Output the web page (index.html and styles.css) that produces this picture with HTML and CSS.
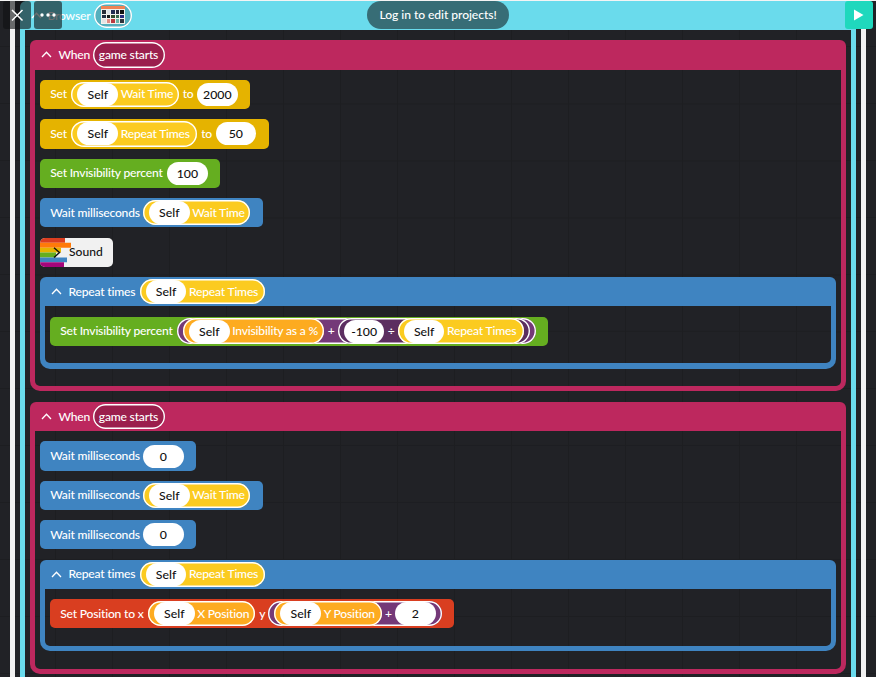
FILE: index.html
```html
<!DOCTYPE html>
<html lang="en">
<head>
<meta charset="utf-8">
<title>Project editor</title>
<link rel="stylesheet" href="styles.css">
</head>
<body>
<main class="frame">
  <section class="object">
    <header class="object-head">
      <svg class="chev" viewBox="0 0 11 7"><path d="M1 6 5.500 1.200 10 6"/></svg>
      <span class="t browser">Browser</span>
      <span class="thumb">
        <svg viewBox="0 0 24 18"><rect width="24" height="18" fill="#f2f2ec"/><rect width="24" height="3" fill="#ef8354"/><rect x="1" y="4" width="4" height="4" fill="#252c36"/><rect x="6" y="4" width="3" height="4" fill="#dce2e5"/><rect x="10" y="4" width="4" height="4" fill="#202b51"/><rect x="15" y="4" width="3" height="4" fill="#26283a"/><rect x="19" y="4" width="4" height="4" fill="#111"/><rect x="1" y="9" width="4" height="3" fill="#222f42"/><rect x="6" y="9" width="3" height="3" fill="#151a1a"/><rect x="10" y="9" width="4" height="3" fill="#304b2d"/><rect x="15" y="9" width="3" height="3" fill="#35694c"/><rect x="19" y="9" width="4" height="3" fill="#282b7b"/><rect x="1" y="13" width="4" height="4" fill="#e7e3e4"/><rect x="6" y="13" width="3" height="4" fill="#e18c85"/><rect x="10" y="13" width="4" height="4" fill="#b93a40"/><rect x="15" y="13" width="3" height="4" fill="#6cb4a5"/><rect x="19" y="13" width="4" height="4" fill="#30343d"/></svg>
      </span>
    </header>
    <div class="scripts">
      <section class="loop event">
        <header class="loop-head"><svg class="chev" viewBox="0 0 11 7"><path d="M1 6 5.500 1.200 10 6"/></svg><span class="t when">When</span><span class="rep maroon"><span class="t game">game starts</span></span></header>
        <div class="body">
          <div class="block gold"><span class="t set">Set</span><span class="rep yellow"><span class="val">Self</span><span class="t waittime">Wait Time</span></span><span class="t to">to</span><span class="val">2000</span></div>
          <div class="block gold"><span class="t set">Set</span><span class="rep yellow"><span class="val">Self</span><span class="t reptimes">Repeat Times</span></span><span class="t to">to</span><span class="val">50</span></div>
          <div class="block green"><span class="t invis">Set Invisibility percent</span><span class="val">100</span></div>
          <div class="block blue"><span class="t waitms">Wait milliseconds</span><span class="rep yellow"><span class="val">Self</span><span class="t waittime">Wait Time</span></span></div>
          <div class="block sound">
            <svg class="rainbow" viewBox="0 0 31 30" preserveAspectRatio="none"><path fill="#db3e20" d="M0 0h25v5H0z"/><path fill="#ff7a09" d="M0 5h31v5H0z"/><path fill="#e5b300" d="M0 10h21v5H0z"/><path fill="#65ae20" d="M0 15h16v5H0z"/><path fill="#3f84c1" d="M0 20h27v5H0z"/><path fill="#a5057a" d="M0 25h24v5H0z"/><path class="arrow" d="M14 10l5.500 5-5.500 5"/></svg>
            <span class="t snd">Sound</span>
          </div>
          <section class="loop repeat">
            <header class="loop-head"><svg class="chev" viewBox="0 0 11 7"><path d="M1 6 5.500 1.200 10 6"/></svg><span class="t rept">Repeat times</span><span class="rep yellow"><span class="val">Self</span><span class="t reptimes">Repeat Times</span></span></header>
            <div class="body">
              <div class="block green"><span class="t invis">Set Invisibility percent</span><span class="rep purple"><span class="rep orange"><span class="val">Self</span><span class="t invpct">Invisibility as a %</span></span><span class="t op">+</span><span class="rep plum"><span class="val">-100</span><span class="t op">÷</span><span class="rep yellow"><span class="val">Self</span><span class="t reptimes">Repeat Times</span></span></span></span></div>
            </div>
          </section>
        </div>
      </section>
      <section class="loop event">
        <header class="loop-head"><svg class="chev" viewBox="0 0 11 7"><path d="M1 6 5.500 1.200 10 6"/></svg><span class="t when">When</span><span class="rep maroon"><span class="t game">game starts</span></span></header>
        <div class="body">
          <div class="block blue"><span class="t waitms">Wait milliseconds</span><span class="val">0</span></div>
          <div class="block blue"><span class="t waitms">Wait milliseconds</span><span class="rep yellow"><span class="val">Self</span><span class="t waittime">Wait Time</span></span></div>
          <div class="block blue"><span class="t waitms">Wait milliseconds</span><span class="val">0</span></div>
          <section class="loop repeat">
            <header class="loop-head"><svg class="chev" viewBox="0 0 11 7"><path d="M1 6 5.500 1.200 10 6"/></svg><span class="t rept">Repeat times</span><span class="rep yellow"><span class="val">Self</span><span class="t reptimes">Repeat Times</span></span></header>
            <div class="body">
              <div class="block red"><span class="t setpos">Set Position to x</span><span class="rep orange"><span class="val">Self</span><span class="t xpos">X Position</span></span><span class="t y">y</span><span class="rep purple"><span class="rep orange"><span class="val">Self</span><span class="t xpos">Y Position</span></span><span class="t op">+</span><span class="val">2</span></span></div>
            </div>
          </section>
        </div>
      </section>
    </div>
  </section>
</main>
<div class="tool close"><svg viewBox="0 0 28 28"><path d="M9 9l10.500 10.500M19.500 9L9 19.500"/></svg></div>
<div class="tool more"><svg viewBox="0 0 28 28"><circle cx="8" cy="14" r="1.700"/><circle cx="14" cy="14" r="1.700"/><circle cx="20" cy="14" r="1.700"/></svg></div>
<div class="notice"><span class="t login">Log in to edit projects!</span></div>
<div class="tool play"><svg viewBox="0 0 28 28"><path d="M9 8.500v11l9.500-5.500z"/></svg></div>
</body>
</html>
```

FILE: styles.css
```css
* { box-sizing: border-box; }
body, .body {
  background-color: #212226;
  background-image:
    linear-gradient(90deg, #1d1e21 1px, transparent 1px),
    linear-gradient(#1d1e21 1px, transparent 1px);
  background-size: 57px 57px;
  background-position: 55px 0, 0 46px;
  background-attachment: fixed;
}
body {
  margin: 0;
  height: 677px;
  overflow: hidden;
  position: relative;
  border-top: 1px solid #f4f4f4;
  font: 500 12.1px/16px Lato, "Liberation Sans", sans-serif;
  color: #fff;
}
.frame { margin: 0 10px; height: 676px; padding: 0 5px; border: solid #f1f1f1; border-width: 0 5px; }
.object { height: 700px; border: solid #6adbec; border-width: 0 5px; border-radius: 6px 6px 0 0; }
.object-head { height: 29px; display: flex; align-items: center; padding-left: 6px; background: #6adbec; }
.object-head .chev { margin-right: 5.500px; }
.thumb { margin-left: 4px; width: 38px; height: 25.400px; box-shadow: inset 0 0 0 1.400px #fff; border-radius: 13px; background: #55afbd; display: flex; align-items: center; justify-content: center; }
.thumb svg { width: 24px; height: 18px; }
.scripts { padding: 10.400px 5px; display: flex; flex-direction: column; gap: 10.600px; }
.loop { flex: none; border-radius: 6px 6px 10px 10px; padding: 0 5px 5.300px; }
.loop-head { height: 29.200px; display: flex; align-items: center; padding-left: 6px; }
.chev { width: 11px; height: 7px; flex: none; margin-right: 6.500px; fill: none; stroke: #fff; stroke-width: 1.300; }
.event { background: #bd285e; }
.repeat { background: #3f84c1; align-self: stretch; }
.body {
  border-radius: 0 0 5px 5px;
  padding: 10.300px 5px 17.500px;
  display: flex;
  flex-direction: column;
  align-items: flex-start;
  gap: 10.250px;
}
.block { height: 29.200px; border-radius: 5px; padding: 0 12.500px 0 10.200px; display: flex; align-items: center; }
.gold { background: #e5b300; }
.green { background: #65ae20; }
.blue { background: #3f84c1; }
.red { background: #d93e20; }
.sound { width: 73px; padding: 0; background: #f1f1f1; color: #111; overflow: hidden; }
.rainbow { width: 31px; height: 29.200px; margin-right: -2px; flex: none; }
.arrow { fill: none; stroke: #111; stroke-width: 1.400; }
.t { white-space: pre; flex: none; letter-spacing: -.2px; }
.t.snd { letter-spacing: 0; }
.rep { height: 25.400px; flex: none; box-shadow: inset 0 0 0 1.400px #fff; border-radius: 13px; padding: 0 6px; margin-left: 3.800px; display: flex; align-items: center; }
.rep > .rep:first-child, .rep > .val:first-child { margin-left: 0; }
.maroon { background: #9b1f4d; }
.yellow { background: #fbcb20; }
.orange { background: #fdab20; }
.purple { background: #743978; }
.plum { background: #5c2e60; }
.val { width: 40.600px; height: 23px; flex: none; margin-left: 3.900px; border-radius: 12px; background: #fff; color: #111; text-align: center; font-size: 12.300px; line-height: 23px; }
.rep > .t { margin-left: 2.600px; }
.rep > .t.game { margin-left: 0; }
.rep + .t { margin-left: 4px; }
.rep > .op { margin-left: 3.200px; }
.op + .rep, .op + .val { margin-left: 3.200px; }
.browser { width: 42px; }
.when { width: 30.500px; }
.game { width: 60px; }
.set { width: 17.500px; }
.to { width: 10.500px; }
.waittime { width: 52px; }
.reptimes { width: 70.500px; }
.invis { width: 113px; }
.waitms { width: 89px; }
.rept { width: 67.500px; }
.invpct { width: 86.300px; }
.op { width: 7px; text-align: center; }
.setpos { width: 84px; }
.xpos { width: 52px; }
.y { width: 5.500px; }
.tool { position: absolute; top: 0; width: 28px; height: 28px; border-radius: 3px; background: rgba(15, 16, 18, .6); }
.tool svg { display: block; width: 28px; height: 28px; fill: #fff; }
.close { left: 3px; }
.close path { fill: none; stroke: #fff; stroke-width: 1.500; }
.more { left: 34px; }
.play { left: 845px; background: #1fd8bd; }
.notice { position: absolute; left: 367px; top: 0; width: 142px; height: 28px; border-radius: 14px; background: #376d76; display: flex; align-items: center; justify-content: center; }
.t.login { width: 117px; letter-spacing: -.06px; }
```
